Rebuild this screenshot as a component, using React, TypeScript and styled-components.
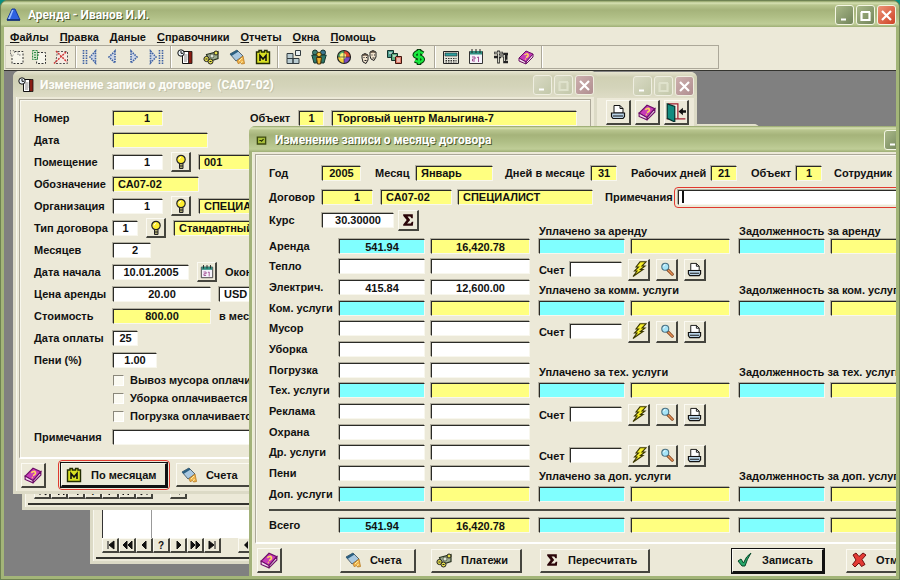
import React from "react";
import styled, { createGlobalStyle, css } from "styled-components";

const FACE = "#ece9d8";
const YELLOW = "#ffff80";
const CYAN = "#80ffff";

const GlobalStyle = createGlobalStyle`
  *, *::before, *::after { box-sizing: border-box; }
  html, body, #root { height: 100%; }
  body {
    margin: 0;
    overflow: hidden;
    background: #0a8f80;
    color: #111;
    font: bold 11px/14px "Liberation Sans", Arial, sans-serif;
  }
  button, input, select { font: inherit; color: inherit; }
`;

/* ---------- icons ---------- */

const ICONS: Record<string, React.ReactNode> = {
  logo: (
    <>
      <path d="M6 2h3l5 11H1z" fill="#2e62e0" stroke="#173a9c" />
      <path d="M6 3h1.500L4 12H2z" fill="#9cc2ff" />
      <path d="M1 13h13" stroke="#122c70" strokeWidth="1.500" />
    </>
  ),
  add: (
    <>
      <path d="M5.500 2.500h8.500v12h-11v-8" fill="#f6f5ea" stroke="#333" strokeDasharray="2 1.500" />
      <path d="M1.500 1v5h3M4 1l2 3M9 2v4h3" stroke="#777" strokeDasharray="1.500 1" />
    </>
  ),
  edit: (
    <>
      <path d="M6.500 3.500h8v11h-9z" fill="#f6f5ea" stroke="#333" strokeDasharray="2 1.500" />
      <path d="M1.500 1.500h5v9h-5z" fill="#cfe3c8" stroke="#2f8a47" strokeDasharray="2 1" />
      <path d="M3 3.500h4M3 6h6M3 8.500h4" stroke="#2f8a47" strokeDasharray="2 1" />
    </>
  ),
  del: (
    <>
      <path d="M4.500 2.500h10v12h-12z" fill="#f6ece4" stroke="#555" strokeDasharray="2 1.500" />
      <path d="M3 2l11 11M13 3L1 14.500" stroke="#d03838" strokeWidth="1.500" strokeDasharray="2 1" />
    </>
  ),
  first: <path d="M1.500 1v14M4.500 1v14M13.500 2L8 8l5.500 6z" fill="#cdd6e6" stroke="#3f62a4" strokeWidth="1.600" strokeDasharray="1.500 1" />,
  prev: <path d="M11 2L5 8l6 6z" fill="#cdd6e6" stroke="#3f62a4" strokeWidth="1.600" strokeDasharray="1.500 1" />,
  next: <path d="M5 2l6 6-6 6z" fill="#cdd6e6" stroke="#3f62a4" strokeWidth="1.600" strokeDasharray="1.500 1" />,
  last: <path d="M2.500 2L8 8l-5.500 6zM11.500 1v14M14.500 1v14" fill="#cdd6e6" stroke="#3f62a4" strokeWidth="1.600" strokeDasharray="1.500 1" />,
  contract: (
    <>
      <path d="M5.500 2.500h7v12h-7z" fill="#fff" stroke="#111" />
      <path d="M11.500 2.500h3.500v12h-3.500z" fill="#8a1d12" stroke="#111" strokeWidth=".8" />
      <path d="M7 6h3.500M7 8h3.500M7 10h3.500M7 12h3" stroke="#888" />
      <circle cx="4" cy="4" r="3.200" fill="#e9f2f8" stroke="#111" />
      <path d="M4 2v2.300h2" stroke="#111" fill="none" />
    </>
  ),
  money: (
    <>
      <path d="M3.500 5.500l11.500-3v7l-9 3z" fill="#9fae92" stroke="#26301d" strokeWidth="1.200" />
      <circle cx="9" cy="7" r="2" fill="#dfe6d6" stroke="#26301d" strokeWidth=".6" />
      <circle cx="13" cy="4" r="2" fill="#e6e04a" stroke="#222" />
      <circle cx="3.500" cy="10" r="2.600" fill="#e6e04a" stroke="#222" />
      <circle cx="7.500" cy="12.500" r="2.500" fill="#e6e04a" stroke="#222" />
      <path d="M2.500 10h2M6.500 12.500h2" stroke="#222" />
    </>
  ),
  bill: (
    <>
      <path d="M1 5l7-4 6 6-7 5z" fill="#a9c8e0" stroke="#55656e" />
      <path d="M1 5l7-4 1.500 1.500-7 4.500z" fill="#2b5f80" />
      <path d="M8 12l6-5 1.500 7.500-3 .5-1-2-2 2z" fill="#f0b450" stroke="#b77a20" strokeWidth=".8" />
      <path d="M10 12l3-3M12 14l1.500-2" stroke="#fff0a0" />
    </>
  ),
  month: (
    <>
      <path d="M1.500 3h2.500V1.500h2.500V3h3V1.500h2.500V3h2.500v11.500h-13z" fill="#d9e024" stroke="#222c00" strokeWidth="1.400" />
      <path d="M5 12V6.500l3 3.500 3-3.500V12" fill="none" stroke="#111" strokeWidth="1.600" />
    </>
  ),
  blocks: (
    <>
      <path d="M1 4.500h6v5H1zM1 9.500h6v5H1zM7 9.500h6v5H7z" fill="#b8cbd0" stroke="#333c40" />
      <path d="M9.500 1.500h5v5h-5z" fill="#e6eef0" stroke="#333c40" />
    </>
  ),
  people: (
    <>
      <circle cx="4" cy="3.500" r="2.500" fill="#3f7f72" stroke="#12332c" />
      <circle cx="12" cy="3.500" r="2.500" fill="#3c7690" stroke="#12332c" />
      <path d="M.8 6h6l-1 8H3zM9 6h6.200l-2.200 8h-3z" fill="#2d7768" stroke="#12332c" />
      <circle cx="8" cy="5.500" r="2.300" fill="#f4c342" stroke="#4b3206" />
      <path d="M5.500 8.500h5l-1 6.500h-3z" fill="#e9b12f" stroke="#4b3206" />
    </>
  ),
  pie: (
    <>
      <path d="M8 8V1.500A6.500 6.500 0 0 1 14.500 8z" fill="#e0482e" />
      <path d="M8 8h6.500A6.500 6.500 0 0 1 8 14.500z" fill="#7a4bc0" />
      <path d="M8 8H1.500A6.500 6.500 0 0 1 8 1.500z" fill="#5ab06a" />
      <path d="M8 8v6.500A6.500 6.500 0 0 1 1.500 8z" fill="#f4d03c" />
      <circle cx="8" cy="8" r="6.500" stroke="#222" strokeWidth="1.200" />
      <circle cx="7" cy="7" r="3" fill="#fff27a" />
      <path d="M8 1.500v13M1.500 8h13" stroke="#222" strokeWidth=".6" />
    </>
  ),
  faces: (
    <>
      <path d="M1 6q3-3 6 0v5l-2 3.500-3-1.500-1-4z" fill="#f0e2cc" stroke="#222" />
      <path d="M9 3q3-3 6 0v5l-2 3.500-3-1.500-1-3z" fill="#f0e2cc" stroke="#222" />
      <path d="M2.500 8.500h1M5 8.500h1M3.500 11.500h2M10.500 6h1M13 6h1M11.500 9h2" stroke="#222" />
      <path d="M1 7q3-4 6 0l-3-.5zM9 4q3-4 6 0l-3-.5z" fill="#4a3a2a" />
    </>
  ),
  cards: (
    <>
      <path d="M1.500 1.500h6v7h-6z" fill="#4d9b8c" stroke="#12332c" />
      <path d="M5.500 4.500h6v7h-6z" fill="#5fae7f" stroke="#12332c" />
      <path d="M9.500 7.500h6v7h-6z" fill="#d97a68" stroke="#40150d" />
      <path d="M3 4h3M7 7h3M11 10h3M11 12h3" stroke="#fff" />
    </>
  ),
  dollar: (
    <>
      <path d="M12 4.500Q8 1.500 5 4t1 4h4q3 2 1 4t-7-.5M8 0v16" fill="none" stroke="#063d0c" strokeWidth="4.500" />
      <path d="M12 4.500Q8 1.500 5 4t1 4h4q3 2 1 4t-7-.5M8 1v14" fill="none" stroke="#19e83e" strokeWidth="2.400" />
    </>
  ),
  calc: (
    <>
      <path d="M.5 2.500h15v12H.5z" fill="#e5e5da" stroke="#222" />
      <path d="M2 4h12v3H2z" fill="#2d9f9f" stroke="#222" strokeWidth=".6" />
      <path d="M2.500 9.500h11M2.500 11.500h11M2.500 13h11" stroke="#333" strokeDasharray="1.500 1" />
    </>
  ),
  calendar: (
    <>
      <path d="M1.500 2.500h13v12h-13z" fill="#f5f3fb" stroke="#333" />
      <path d="M2 2h12v3.500H2z" fill="#2f8f80" />
      <path d="M4 0v4M8 0v4M12 0v4" stroke="#222" />
      <path d="M4 8h3v2H4.500v2H7M9 8.500l1.500-.5v5" fill="none" stroke="#a04a90" />
    </>
  ),
  tools: (
    <>
      <path d="M1 4h9M5.500 1.500v13M1 8h7M5.500 7h9M15 5h-3.500v8H15M11.500 9.500h3" fill="none" stroke="#222" strokeWidth="2.600" />
      <path d="M1.500 4h8M5.500 2.500v11M6 7h5M11.500 6v6" fill="none" stroke="#d5d5c8" />
    </>
  ),
  book: (
    <>
      <path d="M1 9l7-7 7 3-7 8z" fill="#c83cb8" stroke="#6b0d66" />
      <path d="M1 9v3l7 3v-2zM8 13l7-8v3l-7 7z" fill="#f3dcee" stroke="#6b0d66" />
      <path d="M6.500 6q2.500-2 3.500-.5T8 8.500M7 10l.8.3" fill="none" stroke="#ffd95c" strokeWidth="1.500" />
    </>
  ),
  bulb: (
    <>
      <circle cx="8" cy="5.500" r="4.200" fill="#ffee30" stroke="#222" strokeWidth="1.200" />
      <path d="M6.500 9.500h3.500v5H6.500z" fill="#aaa670" stroke="#222" />
      <path d="M6.500 12h3.500" stroke="#222" />
      <path d="M6 5.500q0-2 2-2" stroke="#fff" fill="none" />
    </>
  ),
  sigma: <path d="M2.500 1.500h11v4.500H12L10.500 4H7.500l3 4-3.500 4h4l1.500-2H14l-.5 4.500h-11V13L6.500 8l-4-5z" fill="#2a0508" />,
  bolt: (
    <path d="M9 .8h6L11 5h3L9.500 8.500H12L2 15.500 6 10H3.500L7.500 6H5z" fill="#f8f02a" stroke="#3a3600" strokeWidth="1.100" />
  ),
  lens: (
    <>
      <path d="M9 9l5 5" stroke="#7a3c14" strokeWidth="3.500" strokeLinecap="round" />
      <path d="M9.500 9.500L14 14" stroke="#e8935a" strokeWidth="1.800" strokeLinecap="round" />
      <circle cx="6" cy="5.500" r="4" fill="#a6e4f7" stroke="#4a7184" strokeWidth="1.200" />
      <path d="M4 5q.5-2 2-2" stroke="#fff" fill="none" />
    </>
  ),
  printer: (
    <>
      <path d="M4 9V1.500h6L13 4.500V9z" fill="#fff" stroke="#111" />
      <path d="M10 1.500v3h3" fill="none" stroke="#111" />
      <path d="M1.500 9h13v3.500l-1.500 2h-10l-1.500-2z" fill="#b8d2e6" stroke="#111" strokeWidth="1.200" />
      <path d="M3 12h10" stroke="#111" />
    </>
  ),
  door: (
    <>
      <path d="M.5 13.500h15" stroke="#a02030" />
      <path d="M1.500 1.500h8v12" fill="#f5f3e8" stroke="#a02030" />
      <path d="M1 1.500l6 2V16l-6-3z" fill="#128c80" stroke="#07332f" />
      <path d="M16 7.500h-4" stroke="#111" strokeWidth="2" />
      <path d="M10 7.500l3.500-3v6z" fill="#111" />
    </>
  ),
  check: <path d="M1 9l3-2 2.500 4Q9 4 14 1q-4 6-6 13H5z" fill="#27a86a" stroke="#0a4a2a" />,
  cross: <path d="M2 3l3-2 3 3.500L12 1l3 2-4 4.500 3 5-3.500 2L8 11l-4 4-2.500-2.500L5 8z" fill="#e33a34" stroke="#701010" />,
  doc: (
    <>
      <path d="M2 3h12v10H2z" fill="#a9c03a" stroke="#3c4a10" strokeWidth="2" />
      <path d="M5 8h2l1 1 3-3" stroke="#1e2a00" fill="none" strokeWidth="1.500" />
    </>
  ),
};

const Svg = styled.svg<{ $size: number }>`
  display: block;
  flex: none;
  width: ${(p) => p.$size}px;
  height: ${(p) => p.$size}px;
`;

function Icon({ name, size = 16 }: { name: string; size?: number }) {
  return (
    <Svg $size={size} viewBox="0 0 16 16" fill="none" aria-hidden="true">
      {ICONS[name]}
    </Svg>
  );
}

/* ---------- window chrome ---------- */

const TitleBar = styled.header<{ $inactive?: boolean }>`
  display: flex;
  align-items: center;
  gap: 6px;
  height: 26px;
  padding: 2px 3px 0 5px;
  border-radius: 6px 6px 0 0;
  color: ${(p) => (p.$inactive ? "#fdfdf8" : "#fff")};
  background: ${(p) =>
    p.$inactive
      ? "linear-gradient(#e6e4d0, #d0d0b4 20%, #d4d4ba 60%, #dedcc6)"
      : "linear-gradient(#8fa065 0, #d8e2b4 2px, #b9c68f 4px, #a5b37a 9px, #b0bf86 16px, #bfcd97 23px, #9eae75 26px)"};
`;

const TitleText = styled.h1<{ $inactive?: boolean }>`
  flex: 1;
  margin: 0;
  overflow: hidden;
  white-space: pre;
  font: bold 12px/18px Roboto, "Open Sans", sans-serif;
  text-shadow: 1px 1px 0 ${(p) => (p.$inactive ? "#c4c3aa" : "#4d5a2c")};
`;

const ChromeButtons = styled.div`
  display: flex;
  gap: 2px;
`;

const ChromeButton = styled.button<{ $kind: "plain" | "close"; $inactive?: boolean }>`
  display: grid;
  place-items: center;
  width: 19px;
  height: 20px;
  padding: 0;
  border: 1px solid ${(p) => (p.$inactive ? "#efeee0" : "#f4f6e4")};
  border-radius: 3px;
  background: ${(p) =>
    p.$kind === "close"
      ? p.$inactive
        ? "linear-gradient(135deg, #cdb0ae, #b08e90)"
        : "linear-gradient(135deg, #ec9478, #cf4226)"
      : p.$inactive
        ? "linear-gradient(135deg, #d9dac4, #c3c8aa)"
        : "linear-gradient(135deg, #a9b888, #72845a)"};
`;

const CHROME_SHAPES = {
  min: "M3 10.500h5",
  max: "M2 3h9M2.500 3v8h8V3",
  close: "M2 2l9 9M11 2l-9 9",
};

function WindowButtons({ inactive }: { inactive?: boolean }) {
  const titles = { min: "Свернуть", max: "Развернуть", close: "Закрыть" };
  return (
    <ChromeButtons>
      {(["min", "max", "close"] as const).map((k) => (
        <ChromeButton key={k} type="button" $kind={k === "close" ? "close" : "plain"} $inactive={inactive} aria-label={titles[k]}>
          <svg width="13" height="13" viewBox="0 0 13 13" fill="none" aria-hidden="true">
            <path d={CHROME_SHAPES[k]} stroke={inactive && k === "max" ? "#dfe2cc" : "#fff"} strokeWidth="2.200" />
          </svg>
        </ChromeButton>
      ))}
    </ChromeButtons>
  );
}

const Frame = styled.div`
  display: flex;
  flex-direction: column;
  height: 100vh;
  border: 1px solid #6f8252;
  border-radius: 7px 7px 0 0;
  background: #a3b578;
  overflow: hidden;
`;

const FrameBody = styled.div`
  flex: 1;
  display: flex;
  flex-direction: column;
  min-height: 0;
  margin: 0 3px 3px;
  background: ${FACE};
`;

const MenuBar = styled.nav`
  display: flex;
  gap: 11px;
  height: 18px;
  padding: 1px 6px 0;
`;

const MenuItem = styled.button`
  padding: 0;
  border: 0;
  background: none;
  line-height: 14px;

  &::first-letter { text-decoration: underline; }
`;

const ToolBar = styled.div`
  display: flex;
  align-self: flex-start;
  width: 80%;
  height: 24px;
  margin-left: 1px;
  border: 1px solid #aca899;
  border-left-color: #d8d5c4;
`;

const ToolGroup = styled.div<{ $pad: number }>`
  display: flex;
  align-items: center;
  gap: 2px;
  padding: 0 ${(p) => p.$pad}px;
  border-right: 1px solid #aca899;
  box-shadow: 1px 0 #fff;

  &:first-child { padding-left: 1px; }
`;

const ToolButton = styled.button<{ $w: number }>`
  display: grid;
  place-items: center;
  width: ${(p) => p.$w}px;
  height: 22px;
  padding: 0;
  border: 0;
  background: none;
`;

const Desktop = styled.main`
  position: relative;
  flex: 1;
  min-height: 0;
  margin-top: 1px;
  border-top: 1px solid #33332e;
  background: #808080;
  overflow: clip;
`;

const ChildWindow = styled.section<{ $active?: boolean; $x: number; $y: number; $w?: number; $right?: number; $h?: number }>`
  position: absolute;
  left: ${(p) => p.$x}px;
  top: ${(p) => p.$y}px;
  ${(p) => p.$w !== undefined && css`width: ${p.$w}px;`}
  ${(p) => p.$right !== undefined && css`right: ${p.$right}px;`}
  ${(p) => p.$h !== undefined && css`height: ${p.$h}px;`}
  display: flex;
  flex-direction: column;
  border-radius: 7px 7px 0 0;
  background: ${FACE};
  ${(p) =>
    p.$active
      ? css`
          border: 3px solid #a3b27a;
          border-top: 0;
          box-shadow: inset 1px 0 #eef0da;
          ${TitleBar} { margin: 0 -3px; padding-left: 7px; gap: 8px; }
        `
      : css`
          border: 3px solid #dcdac6;
          border-top: 0;
          box-shadow: inset 1px 0 #f8f7ee;
          ${TitleBar} { margin: 0 -3px; }
        `}
`;

const Panel = styled.div`
  margin: 2px 3px 0;
  border: 1px solid #aca899;
  border-bottom: 2px solid #fff;
  box-shadow: inset 1px 1px #f8f7ee;
`;

/* ---------- form controls ---------- */

const Field = styled.input<{ $w?: number; $tone?: "yellow" | "cyan"; $align?: "left" | "center" | "right"; $caret?: boolean }>`
  flex: none;
  width: ${(p) => (p.$w ? `${p.$w}px` : "100%")};
  height: 15px;
  padding: 0 ${(p) => (p.$align === "right" ? 12 : 4)}px 0 4px;
  border: 1px solid #2a2a26;
  border-right-color: #f8f7ee;
  border-bottom-color: #f8f7ee;
  border-radius: 0;
  outline: 0;
  box-shadow: -1px -1px #b2afa0;
  background: ${(p) => (p.$tone === "yellow" ? YELLOW : p.$tone === "cyan" ? CYAN : "#fff")};
  ${(p) => p.$caret && css`background: linear-gradient(#111, #111) 3px 0 / 2px 12px no-repeat #fff;`}
  text-align: ${(p) => p.$align ?? "left"};
  line-height: 13px;
`;

const Label = styled.label<{ $w?: number }>`
  flex: none;
  ${(p) => p.$w && css`width: ${p.$w}px;`}
  white-space: nowrap;
`;

const raised = css`
  border: 1px solid #fbfaf2;
  border-right: 2px solid #45453e;
  border-bottom: 2px solid #45453e;
  background: ${FACE};
`;

const IconButton = styled.button<{ $s: number }>`
  ${raised}
  display: grid;
  place-items: center;
  flex: none;
  width: ${(p) => p.$s}px;
  height: ${(p) => p.$s}px;
  padding: 0;
`;

const TextButton = styled.button<{ $w: number; $default?: boolean }>`
  ${raised}
  display: flex;
  align-items: center;
  flex: none;
  gap: 9px;
  width: ${(p) => p.$w}px;
  height: 24px;
  padding: 0 4px;
  white-space: nowrap;
  ${(p) => p.$default && css`border-color: #fbfaf2 #111 #111 #fbfaf2; box-shadow: 0 0 0 1px #111;`}
`;

const FocusRing = styled.span<{ $grow?: boolean }>`
  display: flex;
  ${(p) => p.$grow && css`flex: 1;`}
  padding: ${(p) => (p.$grow ? "2px 3px" : "2px")};
  border: 1px solid #e0392e;
  border-radius: 4px;
`;

/* ---------- contract window ---------- */

const ContractForm = styled.form`
  display: flex;
  flex-direction: column;
  padding: 7px 12px 8px 14px;
`;

const FormRow = styled.div<{ $h?: number; $indent?: boolean }>`
  display: flex;
  align-items: center;
  gap: ${(p) => (p.$indent ? 6 : 8)}px;
  height: ${(p) => p.$h ?? 22}px;
  ${(p) => p.$indent && css`padding-left: 79px;`}

  & > ${Label}:first-child { margin-right: -8px; }
`;

const Spacer = styled.span<{ $w?: number }>`
  flex: ${(p) => (p.$w ? "none" : "1")};
  width: ${(p) => p.$w ?? 0}px;
`;

const Check = styled.input`
  appearance: none;
  width: 11px;
  height: 11px;
  margin: 0;
  border: 1px solid #8a877a;
  border-right-color: #fff;
  border-bottom-color: #fff;
  background: #fbfaf2;
`;

const ButtonBar = styled.div<{ $pad: number }>`
  display: flex;
  align-items: center;
  padding: ${(p) => p.$pad}px 5px;
`;

function ContractWindow() {
  return (
    <ChildWindow $x={9} $y={0} $w={584} aria-label="Изменение записи о договоре">
      <TitleBar $inactive>
        <Icon name="contract" />
        <TitleText $inactive>Изменение записи о договоре  (СА07-02)</TitleText>
        <WindowButtons inactive />
      </TitleBar>
      <Panel>
        <ContractForm>
          <FormRow>
            <Label $w={79} htmlFor="num">Номер</Label>
            <Field id="num" $w={50} $tone="yellow" $align="right" readOnly defaultValue="1" />
            <Spacer $w={71} />
            <Label $w={41} htmlFor="obj">Объект</Label>
            <Field id="obj" $w={25} $tone="yellow" $align="center" readOnly defaultValue="1" />
            <Field $w={245} $tone="yellow" readOnly defaultValue="Торговый центр Малыгина-7" aria-label="Название объекта" />
          </FormRow>
          <FormRow>
            <Label $w={79} htmlFor="date">Дата</Label>
            <Field id="date" $w={95} $tone="yellow" readOnly />
          </FormRow>
          <FormRow>
            <Label $w={79} htmlFor="room">Помещение</Label>
            <Field id="room" $w={50} $align="right" defaultValue="1" />
            <IconButton type="button" $s={20} aria-label="Выбрать помещение"><Icon name="bulb" /></IconButton>
            <Field $w={120} $tone="yellow" readOnly defaultValue="001" aria-label="Код помещения" />
          </FormRow>
          <FormRow>
            <Label $w={79} htmlFor="code">Обозначение</Label>
            <Field id="code" $w={86} $tone="yellow" readOnly defaultValue="СА07-02" />
          </FormRow>
          <FormRow>
            <Label $w={79} htmlFor="org">Организация</Label>
            <Field id="org" $w={50} $align="right" defaultValue="1" />
            <IconButton type="button" $s={20} aria-label="Выбрать организацию"><Icon name="bulb" /></IconButton>
            <Field $w={240} $tone="yellow" readOnly defaultValue="СПЕЦИАЛИСТ" aria-label="Название организации" />
          </FormRow>
          <FormRow>
            <Label $w={79} htmlFor="kind">Тип договора</Label>
            <Field id="kind" $w={25} $align="center" defaultValue="1" />
            <IconButton type="button" $s={20} aria-label="Выбрать тип"><Icon name="bulb" /></IconButton>
            <Field $w={240} $tone="yellow" readOnly defaultValue="Стандартный" aria-label="Название типа" />
          </FormRow>
          <FormRow>
            <Label $w={79} htmlFor="months">Месяцев</Label>
            <Field id="months" $w={38} $align="right" defaultValue="2" />
          </FormRow>
          <FormRow>
            <Label $w={79} htmlFor="start">Дата начала</Label>
            <Field id="start" $w={76} $align="center" defaultValue="10.01.2005" />
            <IconButton type="button" $s={20} aria-label="Календарь"><Icon name="calendar" size={14} /></IconButton>
            <Label>Окончание</Label>
          </FormRow>
          <FormRow>
            <Label $w={79} htmlFor="price">Цена аренды</Label>
            <Field id="price" $w={98} $align="center" defaultValue="20.00" />
            <Field $w={60} defaultValue="USD" aria-label="Валюта" />
          </FormRow>
          <FormRow>
            <Label $w={79} htmlFor="cost">Стоимость</Label>
            <Field id="cost" $w={98} $tone="yellow" $align="center" readOnly defaultValue="800.00" />
            <span>в месяц</span>
          </FormRow>
          <FormRow>
            <Label $w={79} htmlFor="payday">Дата оплаты</Label>
            <Field id="payday" $w={25} $align="center" defaultValue="25" />
          </FormRow>
          <FormRow>
            <Label $w={79} htmlFor="fine">Пени (%)</Label>
            <Field id="fine" $w={44} $align="center" defaultValue="1.00" />
          </FormRow>
          {["Вывоз мусора", "Уборка", "Погрузка"].map((t, i) => (
            <FormRow key={t} $h={18} $indent>
              <Check type="checkbox" id={`chk${i}`} />
              <label htmlFor={`chk${i}`}>{t} оплачивается</label>
            </FormRow>
          ))}
          <FormRow $h={24}>
            <Label $w={79} htmlFor="note1">Примечания</Label>
            <Field id="note1" $w={463} />
          </FormRow>
        </ContractForm>
      </Panel>
      <ButtonBar $pad={1}>
        <IconButton type="button" $s={25} aria-label="Помощь"><Icon name="book" size={18} /></IconButton>
        <Spacer $w={12} />
        <FocusRing>
          <TextButton type="button" $w={106} $default><Icon name="month" />По месяцам</TextButton>
        </FocusRing>
        <Spacer $w={6} />
        <TextButton type="button" $w={90}><Icon name="bill" />Счета</TextButton>
      </ButtonBar>
    </ChildWindow>
  );
}

/* ---------- list windows behind ---------- */

const ListTools = styled.div`
  display: flex;
  justify-content: flex-end;
  gap: 4px;
  padding: 2px 5px;
`;

const NavRow = styled.div`
  display: flex;
  padding: 0 9px;
`;

const NavButton = styled.button`
  ${raised}
  width: 17px;
  height: 15px;
  padding: 0;
  display: grid;
  place-items: center;
  font-size: 10px;
  line-height: 11px;
`;

const ListBody = styled.div`
  flex: 1;
  display: flex;
  flex-direction: column;
  min-height: 0;
`;

const ListTable = styled.div`
  flex: 1;
  display: grid;
  grid-template-columns: 49px 1fr;
  margin: 0 9px;
  border-left: 1px solid #333;
  background: #fff;
`;

const ListCell = styled.div`
  border-right: 1px solid #999;
`;

const BottomLine = styled.div`
  height: 6px;
  margin: 0 3px 2px;
  border-bottom: 2px solid #33332e;
`;

const NAV = [
  "M3 1v8M9 1L4 5l5 4z",
  "M5 1L1 5l4 4zM10 1L6 5l4 4z",
  "M7 1L3 5l4 4z",
  "?",
  "M4 1l4 4-4 4z",
  "M1 1l4 4-4 4zM6 1l4 4-4 4z",
  "M2 1l5 4-5 4zM8 1v8",
];

function Navigator() {
  return (
    <NavRow>
      {NAV.map((d, i) => (
        <NavButton key={i} type="button" aria-label={`Навигация ${i + 1}`}>
          {d === "?" ? (
            "?"
          ) : (
            <svg width="11" height="10" viewBox="0 0 11 10" aria-hidden="true">
              <path d={d} fill="#111" stroke="#111" />
            </svg>
          )}
        </NavButton>
      ))}
      <Spacer $w={17} />
      <NavButton type="button" aria-label="Влево">
        <svg width="11" height="10" viewBox="0 0 11 10" aria-hidden="true">
          <path d={NAV[2]} fill="#111" />
        </svg>
      </NavButton>
    </NavRow>
  );
}

/* ---------- month window ---------- */

const MonthForm = styled.form`
  padding: 6px 12px 9px 13px;
`;

const HeadRow = styled.div<{ $h: number }>`
  display: flex;
  align-items: center;
  height: ${(p) => p.$h}px;
`;

const Pair = styled.span<{ $gap?: number }>`
  display: flex;
  align-items: center;
  margin-right: ${(p) => p.$gap ?? 14}px;
`;

const Charges = styled.div<{ $total?: boolean }>`
  display: grid;
  grid-template-columns: 64px 86px 102px 86px 102px 86px 99px;
  column-gap: 6px;
  ${(p) =>
    p.$total
      ? css`padding-top: 7px;`
      : css`
          grid-template-rows: 8px;
          grid-auto-rows: 20px 21px 21px;
        `}
`;

const Cell = styled.div<{ $row: number; $col: number; $span?: number }>`
  grid-row: ${(p) => p.$row};
  grid-column: ${(p) => p.$col} / span ${(p) => p.$span ?? 1};
  align-self: start;
  display: flex;
  align-items: center;
  min-width: 0;
  white-space: nowrap;
`;

const CaptionCell = styled(Cell)`
  align-self: end;
  padding-bottom: ${(p) => (p.$row > 1 ? 4 : 1)}px;
`;

const AccountCell = styled(Cell)`
  gap: 6px;
  align-self: center;
  height: 20px;
`;

const Divider = styled.hr`
  height: 2px;
  margin: 2px 0 0;
  border: 0;
  background: #4a4a42;
`;

type Row = { name: string; total?: boolean; rent?: string; sum?: string };

const ROWS: Row[] = [
  { name: "Аренда", total: true, rent: "541.94", sum: "16,420.78" },
  { name: "Тепло" },
  { name: "Электрич.", rent: "415.84", sum: "12,600.00" },
  { name: "Ком. услуги", total: true },
  { name: "Мусор" },
  { name: "Уборка" },
  { name: "Погрузка" },
  { name: "Тех. услуги", total: true },
  { name: "Реклама" },
  { name: "Охрана" },
  { name: "Др. услуги" },
  { name: "Пени" },
  { name: "Доп. услуги", total: true },
];

const CAPTIONS = [
  { row: 1, paid: "Уплачено за аренду", debt: "Задолженность за аренду" },
  { row: 4, paid: "Уплачено за комм. услуги", debt: "Задолженность за ком. услуги" },
  { row: 8, paid: "Уплачено за тех. услуги", debt: "Задолженность за тех. услуги" },
  { row: 13, paid: "Уплачено за доп. услуги", debt: "Задолженность за доп. услуги" },
];

const ACCOUNT_ROWS = [3, 6, 10, 12];

function ChargeRow({ item, row, id }: { item: Row; row: number; id: string }) {
  const cyan = item.total ? "cyan" : undefined;
  const yellow = item.total ? "yellow" : undefined;
  return (
    <>
      <Cell $row={row} $col={1}><Label htmlFor={id}>{item.name}</Label></Cell>
      <Cell $row={row} $col={2}>
        <Field id={id} $tone={cyan} $align="center" readOnly={item.total} defaultValue={item.rent} />
      </Cell>
      <Cell $row={row} $col={3}>
        <Field $w={99} $tone={yellow} $align="center" readOnly={item.total} defaultValue={item.sum} aria-label={`${item.name}, рубли`} />
      </Cell>
      {item.total &&
        [4, 6].map((c) => (
          <React.Fragment key={c}>
            <Cell $row={row} $col={c}><Field $tone="cyan" readOnly aria-label={`${item.name} ${c}`} /></Cell>
            <Cell $row={row} $col={c + 1}><Field $w={99} $tone="yellow" readOnly aria-label={`${item.name} ${c + 1}`} /></Cell>
          </React.Fragment>
        ))}
    </>
  );
}

function MonthWindow() {
  return (
    <ChildWindow $active $x={245} $y={55} $right={-52} aria-label="Изменение записи о месяце договора">
      <TitleBar>
        <Icon name="doc" size={11} />
        <TitleText>Изменение записи о месяце договора</TitleText>
        <WindowButtons />
      </TitleBar>
      <Panel>
        <MonthForm>
          <HeadRow $h={24}>
            <Pair><Label $w={53} htmlFor="year">Год</Label><Field id="year" $w={39} $tone="yellow" $align="center" readOnly defaultValue="2005" /></Pair>
            <Pair $gap={12}><Label $w={41} htmlFor="month">Месяц</Label><Field id="month" $w={77} $tone="yellow" readOnly defaultValue="Январь" /></Pair>
            <Pair><Label $w={86} htmlFor="days">Дней в месяце</Label><Field id="days" $w={26} $tone="yellow" $align="center" readOnly defaultValue="31" /></Pair>
            <Pair><Label $w={80} htmlFor="work">Рабочих дней</Label><Field id="work" $w={26} $tone="yellow" $align="center" readOnly defaultValue="21" /></Pair>
            <Pair $gap={12}><Label $w={45} htmlFor="obj2">Объект</Label><Field id="obj2" $w={26} $tone="yellow" $align="center" readOnly defaultValue="1" /></Pair>
            <Label>Сотрудник</Label>
          </HeadRow>
          <HeadRow $h={24}>
            <Pair $gap={8}><Label $w={53} htmlFor="contract">Договор</Label><Field id="contract" $w={51} $tone="yellow" $align="right" readOnly defaultValue="1" /></Pair>
            <Pair $gap={6}><Field $w={71} $tone="yellow" readOnly defaultValue="СА07-02" aria-label="Обозначение" /></Pair>
            <Pair $gap={12}><Field $w={135} $tone="yellow" readOnly defaultValue="СПЕЦИАЛИСТ" aria-label="Организация" /></Pair>
            <Label $w={69} htmlFor="note2">Примечания</Label>
            <FocusRing $grow><Field id="note2" $caret /></FocusRing>
          </HeadRow>
          <HeadRow $h={22}>
            <Pair $gap={4}><Label $w={53} htmlFor="rate">Курс</Label><Field id="rate" $w={72} $align="center" defaultValue="30.30000" /></Pair>
            <IconButton type="button" $s={21} aria-label="Рассчитать"><Icon name="sigma" size={14} /></IconButton>
          </HeadRow>
          <Charges>
            {CAPTIONS.map((c) => (
              <React.Fragment key={c.row}>
                <CaptionCell $row={c.row} $col={4} $span={2}>{c.paid}</CaptionCell>
                <CaptionCell $row={c.row} $col={6} $span={2}>{c.debt}</CaptionCell>
              </React.Fragment>
            ))}
            {ROWS.map((r, i) => (
              <ChargeRow key={r.name} item={r} row={i + 2} id={`charge${i}`} />
            ))}
            {ACCOUNT_ROWS.map((row) => (
              <AccountCell key={row} $row={row} $col={4} $span={2}>
                <Label $w={25} htmlFor={`acc${row}`}>Счет</Label>
                <Field id={`acc${row}`} $w={52} />
                <IconButton type="button" $s={22} aria-label="Создать счет"><Icon name="bolt" /></IconButton>
                <IconButton type="button" $s={22} aria-label="Найти счет"><Icon name="lens" size={14} /></IconButton>
                <IconButton type="button" $s={22} aria-label="Печать счета"><Icon name="printer" size={15} /></IconButton>
              </AccountCell>
            ))}
          </Charges>
          <Divider />
          <Charges $total>
            <ChargeRow item={{ name: "Всего", total: true, rent: "541.94", sum: "16,420.78" }} row={1} id="all" />
          </Charges>
        </MonthForm>
      </Panel>
      <ButtonBar $pad={4}>
        <IconButton type="button" $s={25} aria-label="Помощь"><Icon name="book" size={18} /></IconButton>
        <Spacer $w={58} />
        <TextButton type="button" $w={76}><Icon name="bill" />Счета</TextButton>
        <Spacer $w={15} />
        <TextButton type="button" $w={91}><Icon name="money" />Платежи</TextButton>
        <Spacer $w={18} />
        <TextButton type="button" $w={110}><Icon name="sigma" size={14} />Пересчитать</TextButton>
        <Spacer />
        <TextButton type="button" $w={92} $default><Icon name="check" />Записать</TextButton>
        <Spacer $w={22} />
        <TextButton type="button" $w={94}><Icon name="cross" />Отмена</TextButton>
      </ButtonBar>
    </ChildWindow>
  );
}

/* ---------- application ---------- */

const MENU = ["Файлы", "Правка", "Даные", "Справочники", "Отчеты", "Окна", "Помощь"];

const TOOLS: { w: number; pad: number; items: [string, string][] }[] = [
  { w: 20, pad: 4, items: [["add", "Добавить"], ["edit", "Изменить"], ["del", "Удалить"]] },
  { w: 20, pad: 4, items: [["first", "Первая"], ["prev", "Предыдущая"], ["next", "Следующая"], ["last", "Последняя"]] },
  { w: 24, pad: 2, items: [["contract", "Договоры"], ["money", "Платежи"], ["bill", "Счета"], ["month", "Месяцы"]] },
  { w: 23, pad: 4, items: [["blocks", "Помещения"], ["people", "Организации"], ["pie", "Типы"], ["faces", "Сотрудники"], ["cards", "Карточки"], ["dollar", "Валюта"]] },
  { w: 23, pad: 4, items: [["calc", "Калькулятор"], ["calendar", "Календарь"], ["tools", "Настройки"], ["book", "Справка"]] },
];

export default function App() {
  return (
    <>
      <GlobalStyle />
      <Frame>
        <TitleBar>
          <Icon name="logo" />
          <TitleText>Аренда - Иванов И.И.</TitleText>
          <WindowButtons />
        </TitleBar>
        <FrameBody>
          <MenuBar>
            {MENU.map((m) => (
              <MenuItem key={m} type="button">{m}</MenuItem>
            ))}
          </MenuBar>
          <ToolBar>
            {TOOLS.map((g, i) => (
              <ToolGroup key={i} $pad={g.pad}>
                {g.items.map(([icon, title]) => (
                  <ToolButton key={icon} type="button" $w={g.w} aria-label={title}>
                    <Icon name={icon} />
                  </ToolButton>
                ))}
              </ToolGroup>
            ))}
          </ToolBar>
          <Desktop>
            <ChildWindow $x={86} $y={53} $w={670} $h={440} aria-label="Список">
              <TitleBar $inactive />
              <ListBody>
                <ListTable><ListCell /></ListTable>
                <Navigator />
                <BottomLine />
              </ListBody>
            </ChildWindow>
            <ChildWindow $x={18} $y={1} $w={675} $h={438} aria-label="Список договоров">
              <TitleBar $inactive>
                <Spacer />
                <WindowButtons inactive />
              </TitleBar>
              <ListTools>
                <IconButton type="button" $s={25} aria-label="Печать"><Icon name="printer" /></IconButton>
                <IconButton type="button" $s={25} aria-label="Помощь"><Icon name="book" size={18} /></IconButton>
                <IconButton type="button" $s={25} aria-label="Выход"><Icon name="door" size={20} /></IconButton>
              </ListTools>
              <ListBody>
                <ListTable><ListCell /></ListTable>
                <Navigator />
                <BottomLine />
              </ListBody>
            </ChildWindow>
            <ContractWindow />
            <MonthWindow />
          </Desktop>
        </FrameBody>
      </Frame>
    </>
  );
}
